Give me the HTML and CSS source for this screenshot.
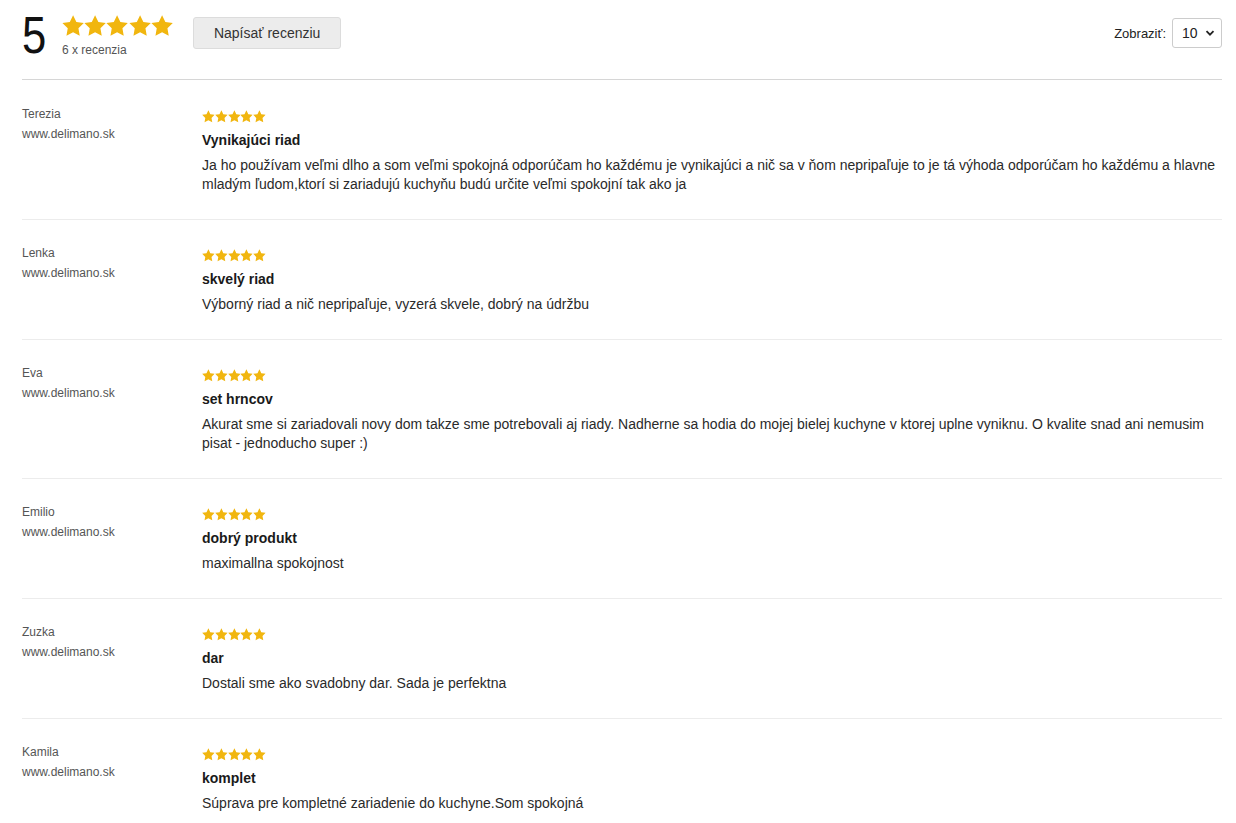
FILE: index.html
```html
<!DOCTYPE html>
<html lang="sk">
<head>
<meta charset="utf-8">
<title>Recenzie</title>
<link rel="stylesheet" href="styles.css">
</head>
<body>
<svg width="0" height="0" class="sprite" aria-hidden="true">
  <symbol id="star" viewBox="1.3 1.3 21.4 21.4">
    <path d="M12 1.6l3.2 6.6 7.2 1-5.2 5.1 1.25 7.2L12 18.1l-6.45 3.4 1.25-7.2L1.6 9.2l7.2-1z"/>
  </symbol>
</svg>
<div class="page">
  <header class="summary">
    <div class="score">5</div>
    <div class="rating">
      <div class="stars stars-big">
        <svg><use href="#star"/></svg><svg><use href="#star"/></svg><svg><use href="#star"/></svg><svg><use href="#star"/></svg><svg><use href="#star"/></svg>
      </div>
      <div class="count">6 x recenzia</div>
    </div>
    <button class="write-btn" type="button">Napísať recenziu</button>
    <div class="show">
      <span class="show-label">Zobraziť:</span>
      <div class="select">
        <span>10</span>
        <svg class="chev" viewBox="0 0 10 10"><path d="M1.5 3.2L5 6.7 8.5 3.2" fill="none" stroke="#222" stroke-width="1.8"/></svg>
      </div>
    </div>
  </header>

  <div class="review">
    <div class="author"><div>Terezia</div><div>www.delimano.sk</div></div>
    <div class="content">
      <div class="stars stars-small"><svg><use href="#star"/></svg><svg><use href="#star"/></svg><svg><use href="#star"/></svg><svg><use href="#star"/></svg><svg><use href="#star"/></svg></div>
      <div class="title">Vynikajúci riad</div>
      <p class="text">Ja ho používam veľmi dlho a som veľmi spokojná odporúčam ho každému je vynikajúci a nič sa v ňom nepripaľuje to je tá výhoda odporúčam ho každému a hlavne mladým ľudom,ktorí si zariadujú kuchyňu budú určite veľmi spokojní tak ako ja</p>
    </div>
  </div>

  <div class="review">
    <div class="author"><div>Lenka</div><div>www.delimano.sk</div></div>
    <div class="content">
      <div class="stars stars-small"><svg><use href="#star"/></svg><svg><use href="#star"/></svg><svg><use href="#star"/></svg><svg><use href="#star"/></svg><svg><use href="#star"/></svg></div>
      <div class="title">skvelý riad</div>
      <p class="text">Výborný riad a nič nepripaľuje, vyzerá skvele, dobrý na údržbu</p>
    </div>
  </div>

  <div class="review">
    <div class="author"><div>Eva</div><div>www.delimano.sk</div></div>
    <div class="content">
      <div class="stars stars-small"><svg><use href="#star"/></svg><svg><use href="#star"/></svg><svg><use href="#star"/></svg><svg><use href="#star"/></svg><svg><use href="#star"/></svg></div>
      <div class="title">set hrncov</div>
      <p class="text">Akurat sme si zariadovali novy dom takze sme potrebovali aj riady. Nadherne sa hodia do mojej bielej kuchyne v ktorej uplne vyniknu. O kvalite snad ani nemusim pisat - jednoducho super :)</p>
    </div>
  </div>

  <div class="review">
    <div class="author"><div>Emilio</div><div>www.delimano.sk</div></div>
    <div class="content">
      <div class="stars stars-small"><svg><use href="#star"/></svg><svg><use href="#star"/></svg><svg><use href="#star"/></svg><svg><use href="#star"/></svg><svg><use href="#star"/></svg></div>
      <div class="title">dobrý produkt</div>
      <p class="text">maximallna spokojnost</p>
    </div>
  </div>

  <div class="review">
    <div class="author"><div>Zuzka</div><div>www.delimano.sk</div></div>
    <div class="content">
      <div class="stars stars-small"><svg><use href="#star"/></svg><svg><use href="#star"/></svg><svg><use href="#star"/></svg><svg><use href="#star"/></svg><svg><use href="#star"/></svg></div>
      <div class="title">dar</div>
      <p class="text">Dostali sme ako svadobny dar. Sada je perfektna</p>
    </div>
  </div>

  <div class="review">
    <div class="author"><div>Kamila</div><div>www.delimano.sk</div></div>
    <div class="content">
      <div class="stars stars-small"><svg><use href="#star"/></svg><svg><use href="#star"/></svg><svg><use href="#star"/></svg><svg><use href="#star"/></svg><svg><use href="#star"/></svg></div>
      <div class="title">komplet</div>
      <p class="text">Súprava pre kompletné zariadenie do kuchyne.Som spokojná</p>
    </div>
  </div>
</div>
</body>
</html>
```

FILE: styles.css
```css
* { box-sizing: border-box; }
html, body { margin: 0; padding: 0; background: #fff; }
body {
  font-family: "Liberation Sans", Arial, sans-serif;
  color: #222;
  font-size: 14px;
}
.sprite { position: absolute; width: 0; height: 0; overflow: hidden; }
.page { padding: 0 14px 0 22px; }

.summary {
  display: flex;
  align-items: flex-start;
  height: 80px;
  padding-top: 8px;
  border-bottom: 1px solid #d6d6d6;
}
.score {
  width: 28px;
  margin: 1px 12px 0 0;
  font-size: 52px;
  line-height: 52px;
  color: #111;
  transform: scaleX(0.84);
  transform-origin: left center;
}
.rating { margin-top: 7px; }
.stars { display: flex; fill: #f1b60f; }
.stars-big svg { width: 22.2px; height: 22px; }
.count {
  margin-top: 6px;
  font-size: 12px;
  line-height: 14px;
  color: #555;
}
.write-btn {
  margin: 9px 0 0 20px;
  height: 32px;
  padding: 0 20px;
  background: #ececec;
  border: 1px solid #dcdcdc;
  border-radius: 3px;
  font-family: inherit;
  font-size: 14px;
  color: #333;
}
.show {
  margin: 10px 0 0 auto;
  display: flex;
  align-items: center;
  gap: 6px;
}
.show-label { font-size: 13px; color: #222; }
.select {
  width: 50px;
  height: 30px;
  border: 1px solid #ccc;
  border-radius: 3px;
  display: flex;
  align-items: center;
  justify-content: space-between;
  padding: 0 6px 0 9px;
  font-size: 14px;
  color: #222;
}
.chev { width: 10px; height: 10px; }

.review {
  display: grid;
  grid-template-columns: 180px 1fr;
  padding: 24px 0 25px;
  border-bottom: 1px solid #ececec;
}
.review + .review { padding-top: 23px; }
.review:last-child { border-bottom: none; }
.author {
  font-size: 12px;
  line-height: 20px;
  color: #555;
}
.content { padding-top: 4px; }
.stars-small { height: 16px; align-items: center; }
.stars-small svg { width: 12.8px; height: 13px; }
.title {
  margin-top: 6px;
  font-weight: bold;
  font-size: 14px;
  line-height: 20px;
  color: #1a1a1a;
}
.text {
  margin: 6px 0 0;
  font-size: 14px;
  line-height: 19px;
  color: #2a2a2a;
}
```
